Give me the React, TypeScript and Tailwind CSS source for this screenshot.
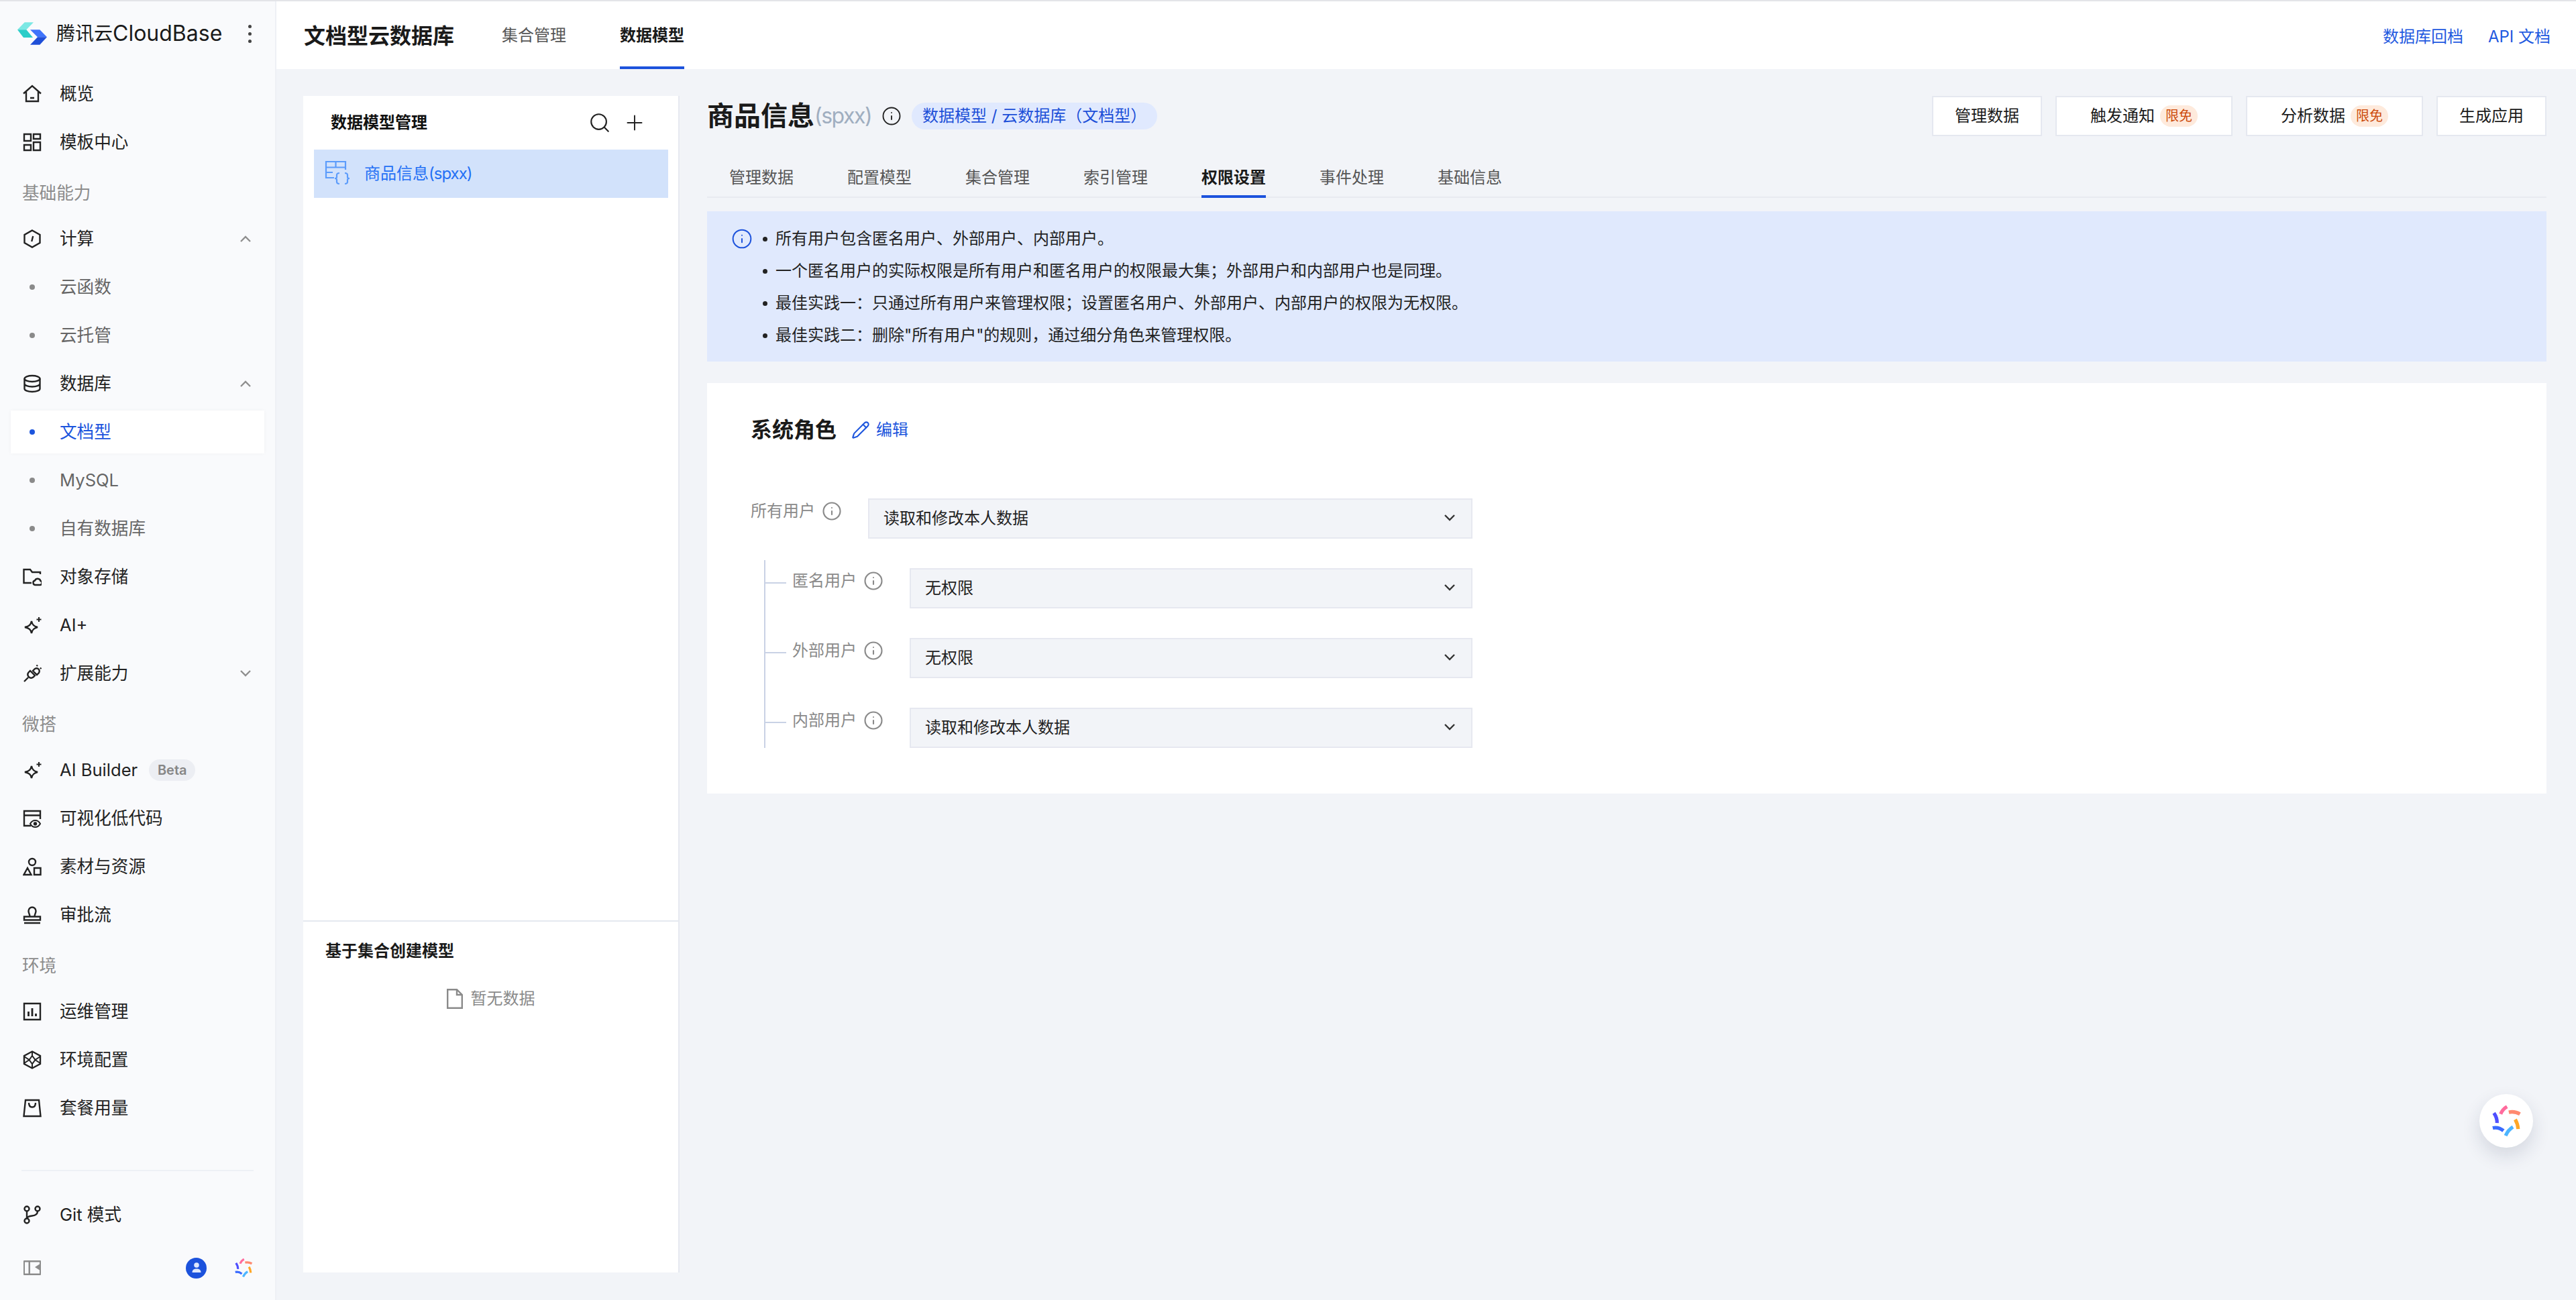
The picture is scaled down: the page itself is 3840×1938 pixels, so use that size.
import type { ReactNode } from "react";
import { Info, Pencil, Plus, Search } from "lucide-react";

const Svg = ({ children }: { children: ReactNode }) => (
  <svg
    width="28"
    height="28"
    viewBox="0 0 28 28"
    fill="none"
    stroke="currentColor"
    strokeWidth="2.4"
    className="shrink-0"
  >
    {children}
  </svg>
);

const icons: Record<string, ReactNode> = {
  home: (
    <Svg>
      <path d="M1 13.5 14 2l13 11.5M5 11v14h18V11M11 20h6" />
    </Svg>
  ),
  grid: (
    <Svg>
      <path d="M2 2h10v10H2zM16 2h10v7H16zM2 18h10v8H2zM16 14h10v12H16z" />
    </Svg>
  ),
  compute: (
    <Svg>
      <path d="M14 1.5 25.5 8v12L14 26.5 2.5 20V8z" />
      <path d="m15.2 10-2 8" />
    </Svg>
  ),
  database: (
    <Svg>
      <ellipse cx="14" cy="6.5" rx="11.5" ry="4.5" />
      <path d="M2.5 6.5v15c0 2.5 5 4.5 11.5 4.5s11.5-2 11.5-4.5v-15M2.5 14c0 2.5 5 4.5 11.5 4.5s11.5-2 11.5-4.5" />
    </Svg>
  ),
  storage: (
    <Svg>
      <path d="M26 10V7H14l-3-4H1.5v20H13" />
      <path d="M19 26h7a3 3 0 0 0 .5-5.8 4.5 4.5 0 0 0-8.5-.7A3.3 3.3 0 0 0 19 26z" />
    </Svg>
  ),
  spark: (
    <Svg>
      <path d="M13 8c1 5 3 7.5 9 9-6 1.5-8 4-9 9-1-5-3-7.5-10-9 7-1.5 9-4 10-9z" />
      <path d="M24 2v7M20.5 5.5h7" strokeWidth="2" />
    </Svg>
  ),
  plug: (
    <Svg>
      <path d="m11 10 7 7-2.5 2.5a5 5 0 0 1-7-7zM8 20l-6 6" />
      <path d="m15 10 3-3a5 5 0 0 1 6 1 5 5 0 0 1 0 5l-3 3zM20.5 3 22 1.5M26 7l1.5-1.5" />
    </Svg>
  ),
  lowcode: (
    <Svg>
      <path d="M12 25H2V3h24v12M2 9.5h24" />
      <path d="M11 22c2-3.5 4.8-5 7.5-5s5.5 1.5 7.5 5c-2 3.5-4.8 5-7.5 5s-5.5-1.5-7.5-5z" strokeWidth="2" />
      <circle cx="18.5" cy="22" r="1.5" fill="currentColor" />
    </Svg>
  ),
  assets: (
    <Svg>
      <circle cx="14" cy="7" r="5" />
      <path d="M7 16 1.5 26h11zM17 16h9.5v10H17z" />
    </Svg>
  ),
  stamp: (
    <Svg>
      <path d="M2 16.5h24v5H2zM2 26h24" />
      <path d="M10.5 16.5c0-4-2-4.5-2-8.5a5.5 5.5 0 0 1 11 0c0 4-2 4.5-2 8.5" />
    </Svg>
  ),
  ops: (
    <Svg>
      <path d="M2 2h24v24H2z" />
      <path d="M8.5 14v7M14 9v12M19.5 17v4" strokeWidth="2.8" />
    </Svg>
  ),
  env: (
    <Svg>
      <path d="M14 1.5 26 8v12l-12 6.5L2 20V8z" />
      <path d="M2 9l7.5 5L2 19M26 9l-7.5 5 7.5 5M9.5 14 14 8l4.5 6L14 20zM14 1.5V8M14 20v6.5" strokeWidth="2" />
    </Svg>
  ),
  bag: (
    <Svg>
      <path d="M4 2h20l2.5 24h-25z" />
      <path d="M9 6c0 4 2 6.5 5 6.5s5-2.5 5-6.5" />
    </Svg>
  ),
  git: (
    <Svg>
      <circle cx="6" cy="5" r="3.5" />
      <circle cx="6" cy="23" r="3.5" />
      <circle cx="22" cy="5" r="3.5" />
      <path d="M6 8.5v11M22 8.5c0 5-3 6.5-8 7-4 .4-7 1-8 4" />
    </Svg>
  ),
};

const Sparkle = ({ size }: { size: number }) => (
  <svg width={size} height={size} viewBox="0 0 48 48" fill="none" strokeWidth="5.5" className="shrink-0">
    <path d="M15.3 13.3Q18.5 5.5 25.3 1.8" stroke="#ff6b9d" />
    <path d="M28 10.5Q37 8.5 45.3 13.3" stroke="#ff8a70" />
    <path d="M38 21.7Q42 28.5 42.5 36.7" stroke="#ffa726" />
    <path d="M34.5 33.5Q27 38 23 47" stroke="#4db5ff" />
    <path d="M3 35Q12 33 19.7 39.3" stroke="#3a6bff" />
    <path d="M4.8 11.7Q10 19 9.7 27.3" stroke="#4f4fff" />
  </svg>
);

type NavItem =
  | { kind: "label"; text: string }
  | { kind: "item"; text: string; icon: string; arrow?: "up" | "down"; badge?: string }
  | { kind: "sub"; text: string; active?: boolean };

const nav: NavItem[] = [
  { kind: "item", text: "概览", icon: "home" },
  { kind: "item", text: "模板中心", icon: "grid" },
  { kind: "label", text: "基础能力" },
  { kind: "item", text: "计算", icon: "compute", arrow: "up" },
  { kind: "sub", text: "云函数" },
  { kind: "sub", text: "云托管" },
  { kind: "item", text: "数据库", icon: "database", arrow: "up" },
  { kind: "sub", text: "文档型", active: true },
  { kind: "sub", text: "MySQL" },
  { kind: "sub", text: "自有数据库" },
  { kind: "item", text: "对象存储", icon: "storage" },
  { kind: "item", text: "AI+", icon: "spark" },
  { kind: "item", text: "扩展能力", icon: "plug", arrow: "down" },
  { kind: "label", text: "微搭" },
  { kind: "item", text: "AI Builder", icon: "spark", badge: "Beta" },
  { kind: "item", text: "可视化低代码", icon: "lowcode" },
  { kind: "item", text: "素材与资源", icon: "assets" },
  { kind: "item", text: "审批流", icon: "stamp" },
  { kind: "label", text: "环境" },
  { kind: "item", text: "运维管理", icon: "ops" },
  { kind: "item", text: "环境配置", icon: "env" },
  { kind: "item", text: "套餐用量", icon: "bag" },
];

const NavRow = ({ item }: { item: NavItem }) => {
  if (item.kind === "label") {
    return <div className="flex h-16 items-center pl-[17px] pt-2 text-[#8c8c8c]">{item.text}</div>;
  }
  if (item.kind === "sub") {
    return (
      <div
        className={`flex h-16 items-center gap-[27px] pl-[18px] ${
          item.active ? "bg-white text-[#1c55dd] shadow-[0_0_6px_rgba(0,0,0,0.04)]" : "text-[#666666]"
        }`}
      >
        <span className="flex w-7 justify-center">
          <span className={`size-2 rounded-full ${item.active ? "bg-[#1c55dd]" : "bg-[#8a8a8a]"}`} />
        </span>
        {item.text}
      </div>
    );
  }
  return (
    <div className="flex h-16 items-center gap-[27px] pl-[18px] pr-5 text-[#222222]">
      {icons[item.icon]}
      <span>{item.text}</span>
      {item.badge && (
        <span className="-ml-2.5 flex h-8 w-[69px] items-center justify-center rounded-full bg-[#eceef3] text-[20px] font-semibold text-[#868686]">
          {item.badge}
        </span>
      )}
      {item.arrow && (
        <svg
          width="16"
          height="10"
          viewBox="0 0 16 10"
          fill="none"
          stroke="#8f8f8f"
          strokeWidth="2.4"
          className={`ml-auto ${item.arrow === "down" ? "" : "rotate-180"}`}
        >
          <path d="m1 1 7 7 7-7" />
        </svg>
      )}
    </div>
  );
};

const Sidebar = () => (
  <aside className="flex h-full w-[412px] shrink-0 flex-col border-r-2 border-[#eef0f5] bg-[#f9fafc] text-[25.6px]">
    <div className="flex h-24 items-center pl-5">
      <svg width="60" height="48" viewBox="0 0 60 48" className="shrink-0">
        <path d="M6 18.3 16.7 7.3H30L19.3 18.3z" fill="#7be8e4" />
        <path d="M6 18.3h13.3L29 30H15z" fill="#2bcdc8" />
        <path d="M25 18.3h14.3L50 29.3H36z" fill="#3f73fb" />
        <path d="M50 29.3H36L25 40.7h14.3z" fill="#1f4fd8" />
      </svg>
      <span className="ml-1 text-[28px] text-[#1a1a1a]">腾讯云</span>
      <span className="text-[32px] text-[#1a1a1a]">CloudBase</span>
      <span className="ml-[39px] flex flex-col gap-1.5">
        <span className="size-[5px] rounded-full bg-[#444444]" />
        <span className="size-[5px] rounded-full bg-[#444444]" />
        <span className="size-[5px] rounded-full bg-[#444444]" />
      </span>
    </div>
    <nav className="mx-4 mt-[10px] flex flex-col gap-2">
      {nav.map((item) => (
        <NavRow key={item.text} item={item} />
      ))}
    </nav>
    <div className="mt-auto pb-4">
      <div className="mx-8 h-[2px] bg-[#eef0f5]" />
      <div className="mx-4 mt-[33px] flex h-16 items-center gap-[27px] pl-[18px] text-[#222222]">
        {icons.git}
        <span>Git 模式</span>
      </div>
      <div className="mt-[15px] flex h-16 items-center pl-[34px]">
        <svg width="28" height="24" viewBox="0 0 28 24" className="shrink-0">
          <path d="M2 1h24a1 1 0 0 1 1 1v20a1 1 0 0 1-1 1H2a1 1 0 0 1-1-1V2a1 1 0 0 1 1-1zM3 3.5v17h5.5v-17zm8 0v17h14v-5l-7-4.5 7-4.5v-3z" fill="#8c8c8c" fillRule="evenodd" />
        </svg>
        <span className="ml-[215px] flex size-[31px] items-center justify-center overflow-hidden rounded-full bg-[#1c52dc]">
          <svg width="20" height="20" viewBox="0 0 20 20">
            <circle cx="10" cy="6" r="3.8" fill="#dfe8fd" />
            <path d="M3.5 17c0-4 2.5-5.5 6.5-5.5s6.5 1.5 6.5 5.5z" fill="#dfe8fd" />
          </svg>
        </span>
        <span className="ml-[41px]">
          <Sparkle size={28} />
        </span>
      </div>
    </div>
  </aside>
);

const TableIcon = () => (
  <svg width="56" height="56" viewBox="0 0 56 56" fill="none" stroke="#5c9cfb" strokeWidth="2.2" className="shrink-0">
    <path d="M39 22V10H10v24h12M10 18.5h29M24.5 10v8.5M10 26h10" />
    <path d="M30 27q-4 0-4 3v3q0 2-3 2 3 0 3 2v3q0 3 4 3M38 27q4 0 4 3v3q0 2 3 2-3 0-3 2v3q0 3-4 3" />
  </svg>
);

const ModelPanel = () => (
  <section className="flex w-[561px] shrink-0 flex-col border-r-2 border-[#e6e9f0] bg-white text-2xl">
    <div className="flex-1">
      <div className="flex h-20 items-center pl-[41px] pr-[47px]">
        <span className="font-bold text-[#111111]">数据模型管理</span>
        <Search size={34} strokeWidth={1.5} className="ml-auto text-[#222222]" />
        <Plus size={36} strokeWidth={1.3} className="ml-[17px] text-[#222222]" />
      </div>
      <div className="ml-4 mr-[15px] flex h-[72px] items-center gap-[11px] bg-[#d2e2fb] pl-2 text-[#2470f5]">
        <TableIcon />
        <span>
          商品信息<span className="tracking-[-1px]">(spxx)</span>
        </span>
      </div>
    </div>
    <div className="h-[525px] border-t-2 border-[#e5e9f0] pl-[33px] pt-5">
      <div className="flex h-12 items-center font-bold text-[#1a1a1a]">基于集合创建模型</div>
      <div className="mt-[23px] -ml-[33px] flex h-12 items-center justify-center gap-[12px] text-[#8a8a8a]">
        <svg width="24" height="30" viewBox="0 0 24 30" fill="none" stroke="currentColor" strokeWidth="2.4">
          <path d="M1.2 1.2H15L22.8 9v19.8H1.2zM15 1.2V9h7.8" />
        </svg>
        暂无数据
      </div>
    </div>
  </section>
);

const tabs = ["管理数据", "配置模型", "集合管理", "索引管理", "权限设置", "事件处理", "基础信息"];

const tips = [
  "所有用户包含匿名用户、外部用户、内部用户。",
  "一个匿名用户的实际权限是所有用户和匿名用户的权限最大集；外部用户和内部用户也是同理。",
  "最佳实践一：只通过所有用户来管理权限；设置匿名用户、外部用户、内部用户的权限为无权限。",
  "最佳实践二：删除\"所有用户\"的规则，通过细分角色来管理权限。",
];

const ActionButton = ({ text, tag }: { text: string; tag?: boolean }) => (
  <button
    className={`flex h-[60px] items-center gap-2 border-2 border-[#e5e8f0] bg-white text-[#1a1a1a] ${
      tag ? "px-[50px]" : "px-8"
    }`}
  >
    {text}
    {tag && (
      <span className="flex h-8 w-14 items-center justify-center rounded-full bg-[#feeadc] text-[20px] text-[#cc4a0a]">
        限免
      </span>
    )}
  </button>
);

const RoleSelect = ({ value }: { value: string }) => (
  <div className="flex h-[60px] flex-1 items-center justify-between border-2 border-[#e6e8f0] bg-[#f2f4f8] pl-[21px] pr-6 text-[#222222]">
    {value}
    <svg width="16" height="10" viewBox="0 0 16 10" fill="none" stroke="#333333" strokeWidth="2.4" className="-mt-[3px]">
      <path d="m1 1 7 7 7-7" />
    </svg>
  </div>
);

const RoleLabel = ({ text }: { text: string }) => (
  <div className="flex h-[37px] w-[175px] shrink-0 items-center gap-2.5 text-[#8a8a8a]">
    {text}
    <Info size={30} strokeWidth={1.7} />
  </div>
);

const subRoles = [
  { label: "匿名用户", value: "无权限" },
  { label: "外部用户", value: "无权限" },
  { label: "内部用户", value: "读取和修改本人数据" },
];

const Permissions = () => (
  <section className="ml-[41px] flex w-[2742px] flex-col text-2xl">
    <div className="flex h-[60px] items-center">
      <h1 className="text-[40px] font-bold text-[#1a1a1a]">商品信息</h1>
      <span className="text-[32px] tracking-[-1.5px] text-[#a0aec0]">(spxx)</span>
      <Info size={30} strokeWidth={1.5} className="ml-[15px] text-[#222222]" />
      <span className="ml-[15px] flex h-10 items-center rounded-full bg-[#e0e9fe] px-4 text-[#1c4fd8]">
        数据模型 / 云数据库（文档型）
      </span>
      <div className="ml-auto flex gap-5">
        <ActionButton text="管理数据" />
        <ActionButton text="触发通知" tag />
        <ActionButton text="分析数据" tag />
        <ActionButton text="生成应用" />
      </div>
    </div>

    <div className="mt-8 flex h-[60px] gap-20 border-b-2 border-[#e8eaf0] pl-[33px]">
      {tabs.map((tab) => (
        <span
          key={tab}
          className={`-mb-[2px] flex h-[60px] items-center border-b-4 pt-1 ${
            tab === "权限设置" ? "border-[#1c52dc] font-semibold text-[#1a1a1a]" : "border-transparent text-[#555555]"
          }`}
        >
          {tab}
        </span>
      ))}
    </div>

    <div className="mt-5 flex h-[224px] bg-[#e0e9fd] pl-9 pt-[17px] text-[#222222]">
      <Info size={32} strokeWidth={1.5} className="mt-2 shrink-0 text-[#1c52dc]" />
      <ul className="ml-[15px] flex flex-col">
        {tips.map((tip) => (
          <li key={tip} className="flex h-12 items-center gap-[12px]">
            <span className="size-[7px] shrink-0 rounded-full bg-[#222222]" />
            {tip}
          </li>
        ))}
      </ul>
    </div>

    <div className="mt-8 h-[612px] bg-white pl-[65px] pt-[46px]">
      <div className="flex h-12 items-center">
        <h2 className="text-[32px] font-bold text-[#1a1a1a]">系统角色</h2>
        <Pencil size={28} strokeWidth={1.8} className="ml-[22px] text-[#1c55dd]" />
        <span className="ml-[9px] text-[#1c55dd]">编辑</span>
      </div>

      <div className="mt-[78px] flex w-[1076px] items-start">
        <RoleLabel text="所有用户" />
        <RoleSelect value="读取和修改本人数据" />
      </div>

      <div className="ml-5 mt-8 flex w-[1056px] flex-col gap-[44px] border-l-2 border-[#c9d2e5] pt-3">
        {subRoles.map((role) => (
          <div key={role.label} className="flex items-start">
            <span className="mr-[9px] mt-[21px] h-[2px] w-[31px] shrink-0 bg-[#c9d2e5]" />
            <RoleLabel text={role.label} />
            <RoleSelect value={role.value} />
          </div>
        ))}
      </div>
    </div>
  </section>
);

export default function App() {
  return (
    <div className="relative flex h-[1938px] w-[3840px] overflow-hidden border-t-2 border-[#e3e4e8] bg-[#f2f4f8] font-['Inter','Noto_Sans_CJK_SC',sans-serif]">
      <Sidebar />
      <main className="flex min-w-0 flex-1 flex-col">
        <header className="flex h-[101px] shrink-0 items-stretch bg-white pl-[41px] pr-[38px] text-2xl">
          <span className="flex items-center pt-1 text-[32px] font-semibold text-[#1a1a1a]">文档型云数据库</span>
          <span className="ml-[71px] flex items-center border-b-4 border-transparent pt-1 text-[#555555]">集合管理</span>
          <span className="ml-20 flex items-center border-b-4 border-[#1c52dc] pt-1 font-semibold text-[#1a1a1a]">数据模型</span>
          <span className="ml-auto flex items-center pt-1 text-[#1f5ae0]">数据库回档</span>
          <span className="ml-[37px] flex items-center pt-1 text-[#1f5ae0]">API 文档</span>
        </header>
        <div className="flex min-h-0 flex-1 pb-[41px] pl-10 pt-10">
          <ModelPanel />
          <Permissions />
        </div>
      </main>
      <button className="absolute left-[3696px] top-[1629px] flex size-20 items-center justify-center rounded-full bg-white shadow-[0_12px_28px_rgba(30,40,80,0.14)]">
        <Sparkle size={46} />
      </button>
    </div>
  );
}
